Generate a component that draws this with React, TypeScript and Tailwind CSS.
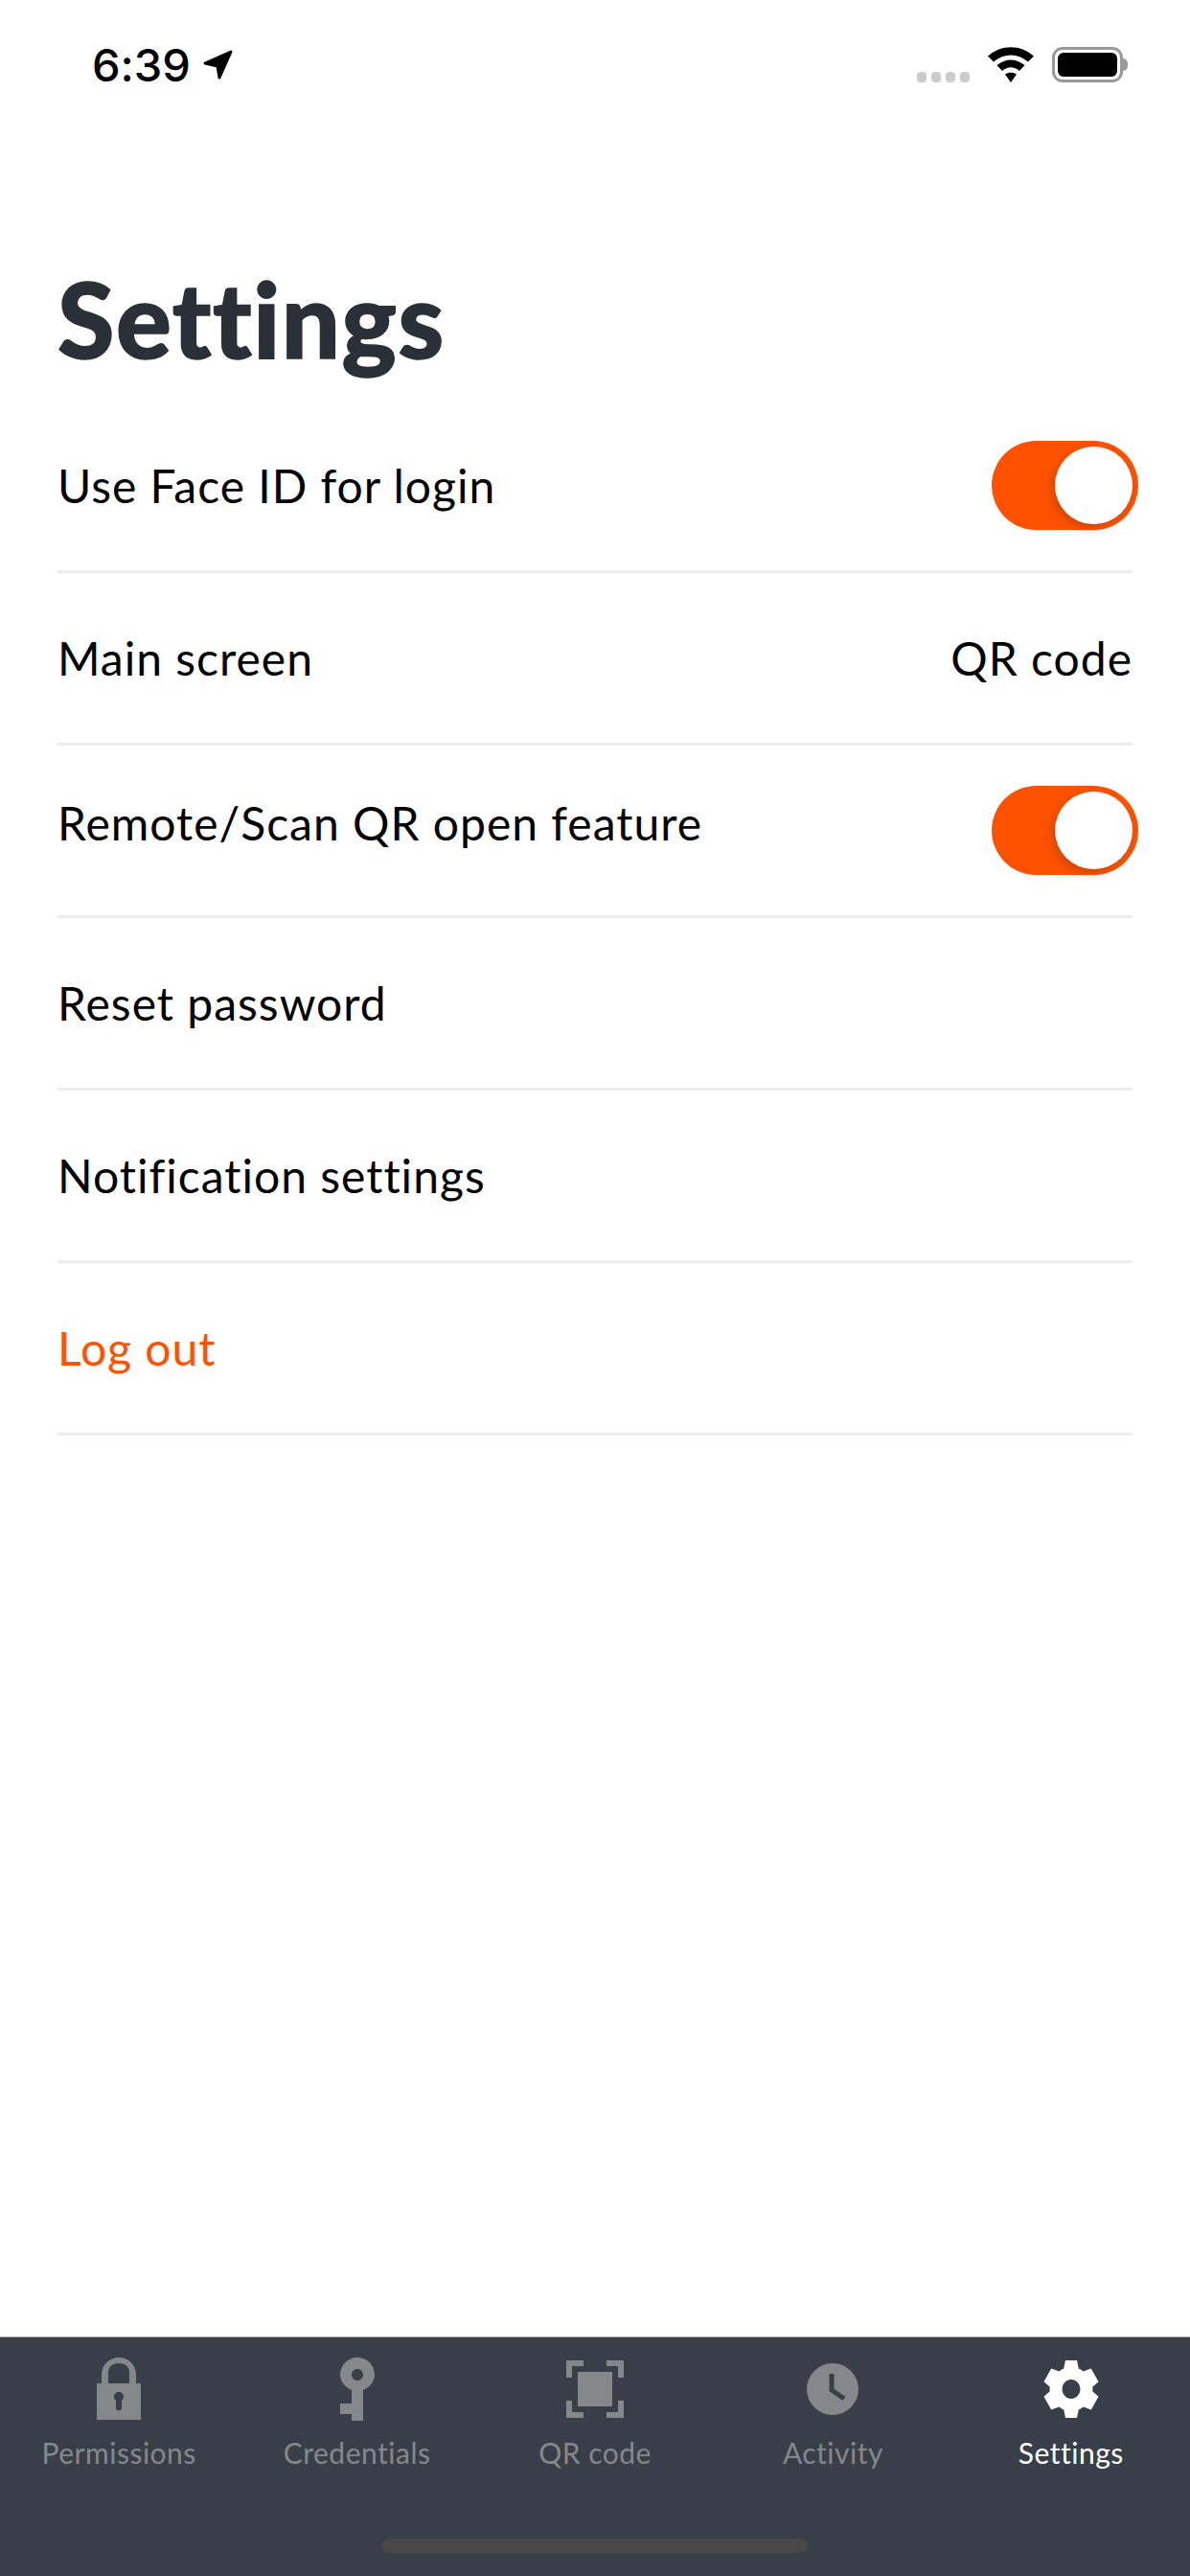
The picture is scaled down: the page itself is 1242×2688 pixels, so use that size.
import React from "react";

const font = { fontFamily: "Lato, 'Noto Sans', sans-serif", fontVariantLigatures: "none" as const };

function Toggle() {
  return (
    <div className="relative w-[153px] h-[93px] rounded-full bg-[#ff5200] shrink-0">
      <div className="absolute left-[66px] top-[6px] w-[81px] h-[81px] rounded-full bg-white shadow-[-3px_4px_10px_rgba(120,50,0,0.35)]" />
    </div>
  );
}

function Row({ label, right, toggle, orange, lift }: { label: string; right?: string; toggle?: boolean; orange?: boolean; lift?: boolean }) {
  return (
    <div className="h-[180px] border-b-[3px] border-[#ececec] flex items-center justify-between">
      <span className={`text-[48px] leading-[60px] tracking-[1px] ${orange ? "text-[#ff5200]" : "text-black"} ${lift ? "-mt-[16px]" : ""}`}>{label}</span>
      {right && <span className="text-[48px] leading-[60px] tracking-[1px] text-black">{right}</span>}
      {toggle && <div className="-mr-[6px]"><Toggle /></div>}
    </div>
  );
}

const C = "#85888a";

function Lock() {
  return (
    <svg width="46" height="66" viewBox="0 0 46 66" fill={C}>
      <path fillRule="evenodd" d="M0 27V65H46V27H41V18C41 8 33 0 23 0S5 8 5 18V27ZM12 27V18C11 10 16 6 23 6S35 10 34 18V27ZM23 36C26 36 28 38 28 41C28 43 27 44 26 45V53C26 56 20 56 20 53V45C19 44 18 43 18 41C18 38 20 36 23 36Z" />
    </svg>
  );
}
function Key() {
  return (
    <svg width="36" height="66" viewBox="0 0 36 66" fill={C}>
      <path fillRule="evenodd" d="M18 0C28 0 36 8 36 18C36 25 31 31 24 34V66H12V59H0V48H12V34C5 31 0 25 0 18C0 8 8 0 18 0ZM18 12C14.700 12 12 14.700 12 18S14.700 24 18 24S24 21.300 24 18S21.300 12 18 12Z" />
    </svg>
  );
}
function Qr() {
  return (
    <svg width="60" height="60" viewBox="0 0 60 60" fill={C}>
      <path d="M0 0H18V6H6V18H0ZM42 0H60V18H54V6H42ZM0 42H6V54H18V60H0ZM54 42H60V60H42V54H54Z" />
      <rect x="12" y="12" width="36" height="36" />
    </svg>
  );
}
function Clock() {
  return (
    <svg width="54" height="54" viewBox="0 0 54 54">
      <circle cx="27" cy="27" r="27" fill={C} />
      <path d="M26 11V28L39 37" stroke="#383f48" strokeWidth="5" fill="none" />
    </svg>
  );
}
function Gear() {
  return (
    <svg width="58" height="60" viewBox="0 0 24 24" fill="#fff" preserveAspectRatio="none">
      <path fillRule="evenodd" d="M9.500 0H14.500L15.200 3.400C15.900 3.700 16.600 4.100 17.200 4.600L20.600 3.400L23.800 8.900L21.200 11.100C21.300 11.500 21.300 12.500 21.200 12.900L23.800 15.100L20.600 20.600L17.200 19.400C16.600 19.900 15.900 20.300 15.200 20.600L14.500 24H9.500L8.800 20.600C8.100 20.300 7.400 19.900 6.800 19.400L3.400 20.600L0.200 15.100L2.800 12.900C2.700 12.500 2.700 11.500 2.800 11.100L0.200 8.900L3.400 3.400L6.800 4.600C7.400 4.100 8.100 3.700 8.800 3.400ZM12 8C9.800 8 8.100 9.800 8.100 12S9.800 16 12 16S15.900 14.200 15.900 12S14.200 8 12 8Z" />
    </svg>
  );
}

function Tab({ label, active, icon }: { label: string; active?: boolean; icon: React.ReactNode }) {
  return (
    <div className="flex-1 flex flex-col items-center">
      <div className="h-[66px] flex items-center justify-center">{icon}</div>
      <span className={`mt-[15px] text-[30px] leading-[36px] tracking-[0.5px] ${active ? "text-white" : "text-[#85888a]"}`}>{label}</span>
    </div>
  );
}

export default function App() {
  return (
    <div className="w-[1242px] h-[2688px] bg-white flex flex-col" style={font}>
      <div className="h-[134px] pt-[49px] pl-[96px] pr-[70px] flex items-start justify-between shrink-0">
        <div className="flex items-start gap-[13px]">
          <span className="text-[47px] leading-[37px] font-medium text-black" style={{ fontFamily: "Inter, sans-serif" }}>6:39</span>
          <svg width="31" height="31" viewBox="0 0 31 31" className="mt-[3px]">
            <path d="M29 2L2 14L15 17L17 29Z" fill="#000" stroke="#000" strokeWidth="3" strokeLinejoin="round" />
          </svg>
        </div>
        <div className="flex items-start">
          <div className="flex gap-[5px] mt-[26px] mr-[19px]">
            <i className="block w-[10px] h-[11px] rounded-[4px] bg-[#cccccc]" />
            <i className="block w-[10px] h-[11px] rounded-[4px] bg-[#cccccc]" />
            <i className="block w-[10px] h-[11px] rounded-[4px] bg-[#cccccc]" />
            <i className="block w-[10px] h-[11px] rounded-[4px] bg-[#cccccc]" />
          </div>
          <svg width="48" height="37" viewBox="0 0 48 37" className="mr-[19px]">
            <path d="M0 9.500C14 -3 34 -3 48 9.500L42 15.500C31 6 17 6 6 15.500Z" />
            <path d="M9.500 19C18.500 11.500 29.500 11.500 38.500 19L33 25C27 20 21 20 15 25Z" />
            <path d="M18 28.500C21.500 26 26.500 26 30 28.500L24 37Z" />
          </svg>
          <div className="relative w-[74px] h-[37px] rounded-[11px] border-[3px] border-[#999999] p-[3px]">
            <div className="w-full h-full rounded-[6px] bg-black" />
            <div className="absolute -right-[8px] top-[9px] w-[5px] h-[13px] rounded-r-[5px] bg-[#999999]" />
          </div>
        </div>
      </div>

      <div className="px-[60px] flex-1">
        <h1 className="text-[108px] leading-[120px] tracking-[1.5px] font-black text-[#2a3038] [-webkit-text-stroke:1.5px_#2a3038] mt-[138px] h-[146px]">Settings</h1>
        <Row label="Use Face ID for login" toggle />
        <Row label="Main screen" right="QR code" />
        <Row label="Remote/Scan QR open feature" toggle lift />
        <Row label="Reset password" />
        <Row label="Notification settings" />
        <Row label="Log out" orange />
      </div>

      <div className="h-[250px] shrink-0 bg-[#383f48] border-t border-[#b5b5b5] pt-[21px] relative">
        <div className="flex">
          <Tab label="Permissions" icon={<Lock />} />
          <Tab label="Credentials" icon={<Key />} />
          <Tab label="QR code" icon={<Qr />} />
          <Tab label="Activity" icon={<Clock />} />
          <Tab label="Settings" active icon={<Gear />} />
        </div>
        <div className="absolute left-[399px] top-[210px] w-[444px] h-[15px] rounded-full bg-[#484848]" />
      </div>
    </div>
  );
}
